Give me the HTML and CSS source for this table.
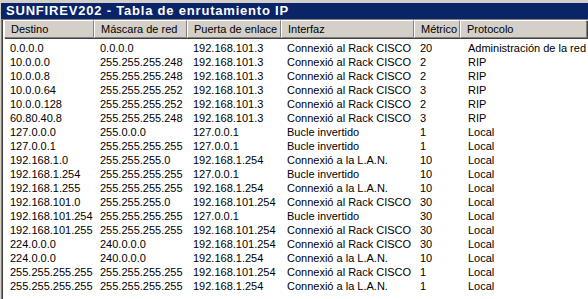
FILE: index.html
```html
<!DOCTYPE html>
<html>
<head>
<meta charset="utf-8">
<link rel="stylesheet" href="styles.css">
</head>
<body>
<div class="window">
  <div class="title">SUNFIREV202 - Tabla de enrutamiento IP</div>
  <div class="list-outer">
    <div class="list">
      <div class="grid head">
        <div class="hc">Destino</div>
        <div class="hc">Máscara de red</div>
        <div class="hc">Puerta de enlace</div>
        <div class="hc">Interfaz</div>
        <div class="hc">Métrico</div>
        <div class="hc">Protocolo</div>
      </div>
      <div class="rows">
        <div class="grid row"><span>0.0.0.0</span><span>0.0.0.0</span><span>192.168.101.3</span><span>Connexió al Rack CISCO</span><span>20</span><span>Administración de la red</span></div>
        <div class="grid row"><span>10.0.0.0</span><span>255.255.255.248</span><span>192.168.101.3</span><span>Connexió al Rack CISCO</span><span>2</span><span>RIP</span></div>
        <div class="grid row"><span>10.0.0.8</span><span>255.255.255.248</span><span>192.168.101.3</span><span>Connexió al Rack CISCO</span><span>2</span><span>RIP</span></div>
        <div class="grid row"><span>10.0.0.64</span><span>255.255.255.252</span><span>192.168.101.3</span><span>Connexió al Rack CISCO</span><span>3</span><span>RIP</span></div>
        <div class="grid row"><span>10.0.0.128</span><span>255.255.255.252</span><span>192.168.101.3</span><span>Connexió al Rack CISCO</span><span>2</span><span>RIP</span></div>
        <div class="grid row"><span>60.80.40.8</span><span>255.255.255.248</span><span>192.168.101.3</span><span>Connexió al Rack CISCO</span><span>3</span><span>RIP</span></div>
        <div class="grid row"><span>127.0.0.0</span><span>255.0.0.0</span><span>127.0.0.1</span><span>Bucle invertido</span><span>1</span><span>Local</span></div>
        <div class="grid row"><span>127.0.0.1</span><span>255.255.255.255</span><span>127.0.0.1</span><span>Bucle invertido</span><span>1</span><span>Local</span></div>
        <div class="grid row"><span>192.168.1.0</span><span>255.255.255.0</span><span>192.168.1.254</span><span>Connexió a la L.A.N.</span><span>10</span><span>Local</span></div>
        <div class="grid row"><span>192.168.1.254</span><span>255.255.255.255</span><span>127.0.0.1</span><span>Bucle invertido</span><span>10</span><span>Local</span></div>
        <div class="grid row"><span>192.168.1.255</span><span>255.255.255.255</span><span>192.168.1.254</span><span>Connexió a la L.A.N.</span><span>10</span><span>Local</span></div>
        <div class="grid row"><span>192.168.101.0</span><span>255.255.255.0</span><span>192.168.101.254</span><span>Connexió al Rack CISCO</span><span>30</span><span>Local</span></div>
        <div class="grid row"><span>192.168.101.254</span><span>255.255.255.255</span><span>127.0.0.1</span><span>Bucle invertido</span><span>30</span><span>Local</span></div>
        <div class="grid row"><span>192.168.101.255</span><span>255.255.255.255</span><span>192.168.101.254</span><span>Connexió al Rack CISCO</span><span>30</span><span>Local</span></div>
        <div class="grid row"><span>224.0.0.0</span><span>240.0.0.0</span><span>192.168.101.254</span><span>Connexió al Rack CISCO</span><span>30</span><span>Local</span></div>
        <div class="grid row"><span>224.0.0.0</span><span>240.0.0.0</span><span>192.168.1.254</span><span>Connexió a la L.A.N.</span><span>10</span><span>Local</span></div>
        <div class="grid row"><span>255.255.255.255</span><span>255.255.255.255</span><span>192.168.101.254</span><span>Connexió al Rack CISCO</span><span>1</span><span>Local</span></div>
        <div class="grid row"><span>255.255.255.255</span><span>255.255.255.255</span><span>192.168.1.254</span><span>Connexió a la L.A.N.</span><span>1</span><span>Local</span></div>
      </div>
    </div>
  </div>
</div>
</body>
</html>
```
FILE: styles.css
```css
html, body {
  margin: 0;
  padding: 0;
  background: #ffffff;
  width: 588px;
  height: 299px;
  overflow: hidden;
}
.window {
  background: #d4d0c8;
  padding-top: 3px;
  padding-left: 1px;
  height: 296px;
  font-family: "Liberation Sans", Arial, sans-serif;
  font-size: 11px;
  color: #000;
}
.title {
  background: #0a246a;
  color: #fff;
  font-weight: bold;
  font-size: 13px;
  letter-spacing: 0.8px;
  height: 16px;
  line-height: 16px;
  padding-left: 5px;
  white-space: nowrap;
}
.list-outer {
  border-top: 1px solid #808080;
  border-left: 1px solid #808080;
  height: 279px;
}
.list {
  border-left: 1px solid #404040;
  background: #fff;
  height: 279px;
}
.grid {
  display: grid;
  grid-template-columns: 90px 93px 94px 133px 46px 127px;
}
.head {
  height: 18px;
  margin-left: 1px;
}
.hc {
  background: #d4d0c8;
  border-top: 1px solid #fff;
  border-left: 1px solid #fff;
  border-right: 1px solid #808080;
  border-bottom: 1px solid #808080;
  box-shadow: 1px 1px 0 #404040;
  padding-left: 6px;
  line-height: 16px;
  white-space: nowrap;
  overflow: hidden;
}
.rows {
  padding-top: 3px;
  margin-left: 1px;
}
.row {
  height: 14px;
  line-height: 14px;
}
.row span {
  padding-left: 6px;
  white-space: nowrap;
  overflow: hidden;
}
.row span:last-child {
  padding-left: 8px;
}
```
